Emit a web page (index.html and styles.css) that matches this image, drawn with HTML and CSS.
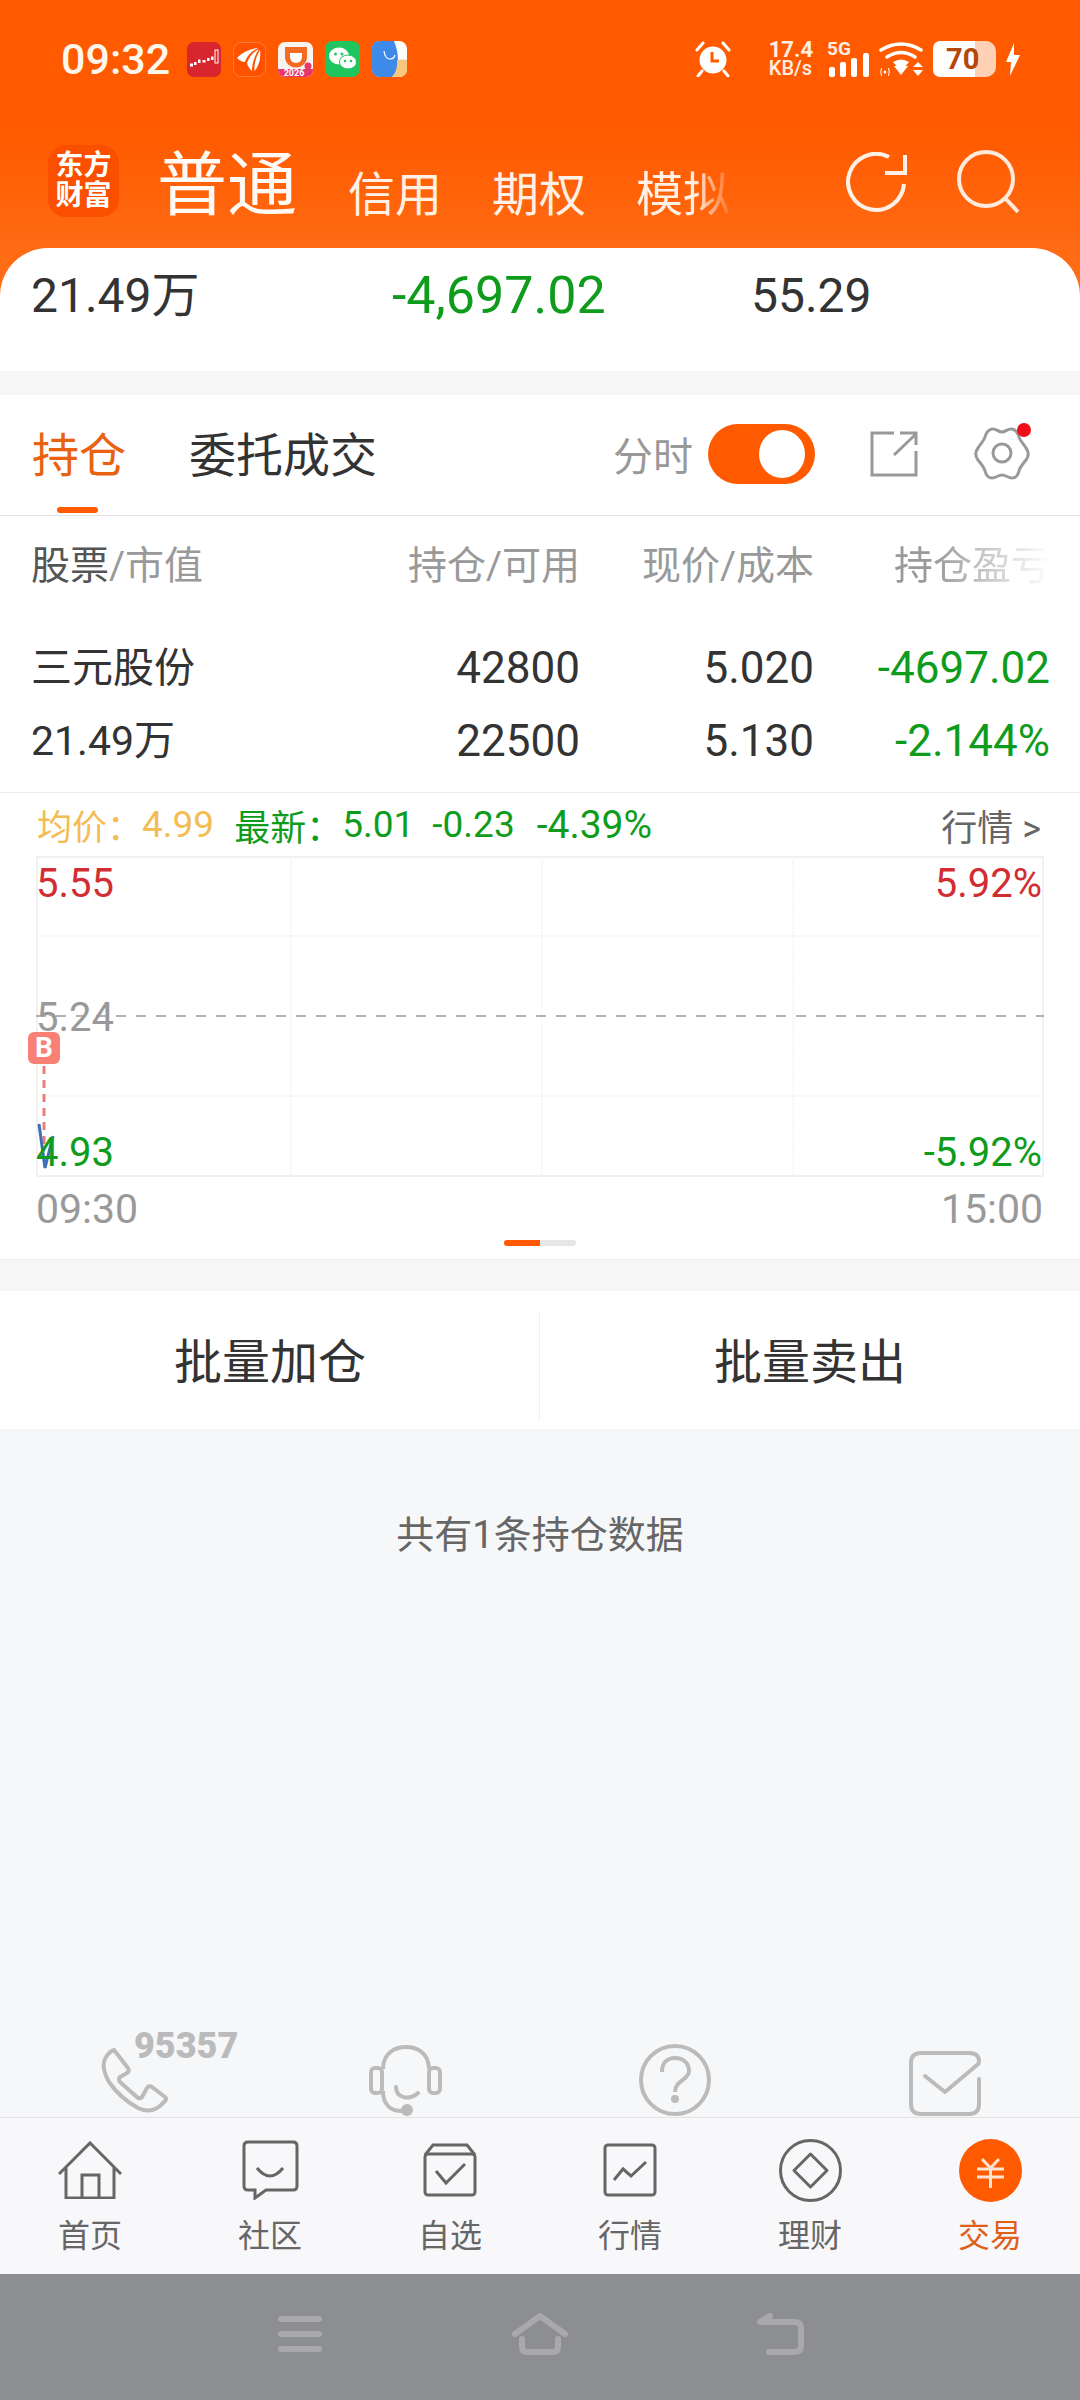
FILE: index.html
```html
<!DOCTYPE html>
<html lang="zh-CN">
<head>
    <meta charset="UTF-8">
    <meta name="viewport" content="width=device-width, initial-scale=1.0">
    <title>交易 - 持仓</title>
    <link rel="stylesheet" href="styles.css">
</head>
<body>
<div class="app">

    <div class="top">
        <div class="status-bar">
            <span class="clock">09:32</span>
            <div class="app-icons">
                <svg width="34" height="35" viewBox="0 0 34 35"><rect width="34" height="35" rx="7" fill="#d8262f"/><g fill="#fff"><rect x="3" y="21.500" width="3" height="3"/><rect x="7" y="20" width="2.500" height="3"/><rect x="11" y="17.500" width="2.500" height="3.500"/><rect x="15.500" y="18" width="3" height="2.500"/><rect x="20" y="16" width="2.500" height="3"/><rect x="24" y="14.500" width="2.500" height="3.500"/></g><rect x="28" y="8" width="3" height="13" fill="none" stroke="#fff" stroke-width="1"/></svg>
                <svg width="33" height="35" viewBox="0 0 33 35"><rect x=".5" y=".5" width="32" height="34" rx="8" fill="#ff5200" stroke="#ff7a3a"/><g fill="#fff"><path d="M25 6 C17 7 10 10 4 16 C7 19 10 20 12 20 C14 14 19 9 25 6Z"/><path d="M26 7 C20 10 16 15 14 21 C15 25 17 27 19 29 C19 21 22 13 26 7Z"/><path d="M27 8 C24 13 21 20 21.500 29 C26 24 28 16 27 8Z"/></g></svg>
                <svg width="35" height="35" viewBox="0 0 35 35"><rect width="35" height="35" rx="7" fill="#f8f4f0"/><path d="M7 5 H29 V15 A11 10.500 0 0 1 7 15Z" fill="#f26a24"/><path d="M12 11 H24 V15 A6 6 0 0 1 12 15Z" fill="#fff"/><path d="M0 27 H35 V28 A7 7 0 0 1 28 35 H7 A7 7 0 0 1 0 28Z" fill="#e8366a"/><circle cx="30" cy="24" r="3.500" fill="#e8366a"/><text class="didi-year" x="16" y="34">2026</text></svg>
                <svg width="35" height="36" viewBox="0 0 35 36"><rect width="35" height="36" rx="8" fill="#1fc55f"/><ellipse cx="14" cy="15" rx="10" ry="8.500" fill="#fff"/><ellipse cx="23" cy="21" rx="8.500" ry="7" fill="#fff" stroke="#1fc55f"/><g fill="#1fc55f"><circle cx="10.500" cy="13" r="1.500"/><circle cx="17" cy="13" r="1.500"/><circle cx="20" cy="20" r="1.300"/><circle cx="26" cy="20" r="1.300"/></g></svg>
                <svg width="35" height="36" viewBox="0 0 35 36"><rect width="35" height="36" rx="8" fill="#fdfdfb"/><path d="M8 0 H22 Q26 10 26 19 Q26 30 20 36 H8 Q0 36 0 28 V8 Q0 0 8 0Z" fill="#3d8ae8"/><path d="M25 19 Q30 18 35 19 V28 Q35 36 27 36 H20 Q26 30 25 19Z" fill="#f6c77d"/><path d="M12 10 Q13 18 18 18 Q22 18 23 14" fill="none" stroke="#fff" stroke-width="1.200"/></svg>
            </div>
            <div class="sys-icons">
                <svg class="alarm" width="38" height="36" viewBox="0 0 38 36"><circle cx="19" cy="19" r="13.500" fill="#fff"/><path d="M3 9 L9 2 M35 9 L29 2 M8 30 L4 35 M30 30 L34 35" stroke="#fff" stroke-width="3" stroke-linecap="round"/><path d="M18 11 V20 H25" fill="none" stroke="#ff5a00" stroke-width="3"/></svg>
                <div class="speed"><span>17.4</span><span class="speed-unit">KB/s</span></div>
                <div class="signal">
                    <span class="signal-type">5G</span>
                    <svg class="bars" width="40" height="24" viewBox="0 0 40 24"><g fill="#fff"><rect x="0" y="14" width="6" height="10" rx="2"/><rect x="11" y="9" width="6" height="15" rx="2"/><rect x="22" y="5" width="6" height="19" rx="2"/><rect x="34" y="0" width="6" height="24" rx="2"/></g></svg>
                </div>
                <svg class="wifi" width="44" height="36" viewBox="0 0 44 36"><g fill="none" stroke="#fff" stroke-width="3.500" stroke-linecap="round"><path d="M2 9 Q22 -3 42 9"/><path d="M8 16 Q22 7 36 16"/></g><path d="M14 21 Q22 16 30 21 L22 30Z" fill="#fff"/><path d="M22 36 L15 27 H29Z" fill="#fff" transform="translate(0 -2)"/><path d="M39 21 L44 26 H34Z M39 35 L34 29 H44Z" fill="#fff"/><circle cx="6" cy="31" r="1.500" fill="#fff"/><path d="M2.500 27 Q1 31 2.500 35 M9.500 27 Q11 31 9.500 35" fill="none" stroke="#fff"/></svg>
                <div class="battery"><span class="battery-level">70</span></div>
                <svg class="bolt" width="14" height="33" viewBox="0 0 14 33"><path d="M8 0 L0 19 H5 L4 33 L14 12 H8Z" fill="#fff"/></svg>
            </div>
        </div>

        <div class="trade-nav">
            <div class="logo"><span>东方</span><span>财富</span></div>
            <span class="nav-main">普通</span>
            <span class="nav-link">信用</span>
            <span class="nav-link">期权</span>
            <span class="nav-link nav-fade">模拟</span>
            <div class="nav-actions">
                <svg width="62" height="61" viewBox="0 0 62 61"><path d="M44 5 A28 28 0 1 0 59 32 M40 21 H60 V3" fill="none" stroke="#fff1e6" stroke-width="4"/></svg>
                <svg width="63" height="64" viewBox="0 0 63 64"><circle cx="29" cy="29" r="27" fill="none" stroke="#ffeadb" stroke-width="4"/><path d="M48 48 L61 62" stroke="#ffeadb" stroke-width="4"/></svg>
            </div>
        </div>

        <div class="summary">
            <span>21.49万</span>
            <span class="down">-4,697.02</span>
            <span>55.29</span>
        </div>
    </div>

    <div class="band band-small"></div>

    <div class="tabs">
        <div class="tab active">持仓</div>
        <div class="tab">委托成交</div>
        <div class="tab-tools">
            <span class="toggle-label">分时</span>
            <div class="toggle"><div class="toggle-knob"></div></div>
            <svg class="share" width="48" height="46" viewBox="0 0 48 46"><path d="M24 2 H2 V44 H46 V20 M24 24 L46 3 M30 2 H46 V14" fill="none" stroke="#999" stroke-width="3"/></svg>
            <div class="gear">
                <svg width="56" height="54" viewBox="0 0 56 54"><path d="M28 5 C24 5 22 1 18 2 C14 3 12 6 11 10 C10 14 7 16 4 21 C1 25 1 29 4 33 C7 37 10 40 11 44 C12 48 14 51 18 51 C22 51 24 48 28 48 C32 48 34 51 38 51 C42 51 44 48 45 44 C46 40 49 37 52 33 C55 29 55 25 52 21 C49 16 46 14 45 10 C44 6 42 3 38 2 C34 1 32 5 28 5Z" fill="none" stroke="#999" stroke-width="3"/><circle cx="28" cy="26" r="9" fill="none" stroke="#999" stroke-width="3"/></svg>
                <span class="gear-dot"></span>
            </div>
        </div>
    </div>

    <div class="table">
        <div class="table-row table-head">
            <span><b>股票</b>/市值</span>
            <span>持仓/可用</span>
            <span>现价/成本</span>
            <span class="head-fade">持仓盈亏</span>
        </div>
        <div class="table-row">
            <span class="stock-name">三元股份</span>
            <span>42800</span>
            <span>5.020</span>
            <span class="down">-4697.02</span>
        </div>
        <div class="table-row">
            <span class="stock-value">21.49万</span>
            <span>22500</span>
            <span>5.130</span>
            <span class="down">-2.144%</span>
        </div>
    </div>

    <div class="chart-section">
        <div class="chart-info">
            <span class="avg avg-label">均价：</span><span class="avg">4.99</span>
            <span class="down latest">最新：</span><span class="down">5.01</span>
            <span class="down change">-0.23</span>
            <span class="down pct">-4.39%</span>
            <span class="quote-link">行情 &gt;</span>
        </div>
        <div class="chart">
            <svg class="chart-grid" width="1008" height="321" viewBox="0 0 1008 321">
                <path d="M0 80 H1008 M0 240 H1008 M255 0 V321 M506 0 V321 M757 0 V321" stroke="#f5f5f5" stroke-width="1.500" stroke-dasharray="2 1"/>
                <path d="M0 160 H1008" stroke="#999" stroke-width="1.500" stroke-dasharray="10 10"/>
                <path d="M8 210 V295" stroke="#ec7d7d" stroke-width="3" stroke-dasharray="8 6"/>
                <path d="M3 268 L9 312 L17 280" fill="none" stroke="#3c6fb5" stroke-width="3"/>
            </svg>
            <span class="chart-label label-top up">5.55</span>
            <span class="chart-label label-mid">5.24</span>
            <span class="chart-label label-bottom down">4.93</span>
            <span class="chart-label label-top label-right up">5.92%</span>
            <span class="chart-label label-bottom label-right down">-5.92%</span>
            <span class="buy-mark">B</span>
        </div>
        <div class="chart-axis"><span>09:30</span><span>15:00</span></div>
        <div class="pager"><span class="pager-on"></span><span class="pager-off"></span></div>
    </div>

    <div class="band"></div>

    <div class="batch">
        <div class="batch-btn">批量加仓</div>
        <div class="batch-btn">批量卖出</div>
    </div>

    <div class="rest">
        <div class="count-note">共有1条持仓数据</div>
        <div class="service">
            <div class="service-item">
                <svg width="70" height="70" viewBox="-2 -2 70 70"><path d="M12 2 L26 20 Q28 23 25 25 L18 29 Q16 31 18 34 L36 50 Q38 51 40 49 L45 40 Q47 37 50 39 L63 49 Q65 51 63 53 L58 58 Q48 66 36 60 Q18 50 7 34 Q-2 18 4 9 Q8 3 12 2Z" fill="none" stroke="#bbb" stroke-width="4" stroke-linejoin="round"/></svg>
                <span class="hotline">95357</span>
            </div>
            <div class="service-item">
                <svg width="73" height="71" viewBox="0 0 73 71"><g fill="none" stroke="#bbb" stroke-width="4"><path d="M14 24 C14 8 26 2 37 2 C48 2 60 8 60 24"/><path d="M14 46 C14 60 22 66 33 66"/><path d="M27 42 C27 53 40 56 49 48" stroke-linecap="round"/><rect x="2" y="23" width="11" height="25" rx="4"/><rect x="60" y="23" width="11" height="25" rx="4"/></g><circle cx="38" cy="65" r="6" fill="#bbb"/></svg>
            </div>
            <div class="service-item">
                <svg width="72" height="72" viewBox="0 0 72 72"><circle cx="36" cy="36" r="34" fill="none" stroke="#bbb" stroke-width="4"/><path d="M23 28 C23 18 29 14 36 14 C45 14 50 20 50 27 C50 36 36 36 36 48" fill="none" stroke="#bbb" stroke-width="4"/><circle cx="36" cy="55" r="4" fill="#bbb"/></svg>
            </div>
            <div class="service-item">
                <svg width="72" height="65" viewBox="0 0 72 65"><path d="M70 28 V53 Q70 63 60 63 H12 Q2 63 2 53 V12 Q2 2 12 2 H60 Q70 2 70 10 Q70 13 68 14 L36 41 L16 25" fill="none" stroke="#bbb" stroke-width="4" stroke-linecap="round" stroke-linejoin="round"/></svg>
            </div>
        </div>
    </div>

    <div class="tabbar">
        <div class="tabbar-item">
            <div class="tabbar-icon"><svg width="64" height="58" viewBox="0 0 64 58"><path d="M1 33 L32 2 L63 33 M8 26 V57 H56 V26 M24 57 V34 H41 V57" fill="none" stroke="#666" stroke-width="3"/></svg></div>
            <span>首页</span>
        </div>
        <div class="tabbar-item">
            <div class="tabbar-icon"><svg width="57" height="60" viewBox="0 0 57 60"><path d="M6 2 H51 Q55 2 55 6 V46 Q55 50 51 50 H24 L13 58 V50 H6 Q2 50 2 46 V6 Q2 2 6 2Z M15 28 Q28 44 41 28" fill="none" stroke="#666" stroke-width="3"/></svg></div>
            <span>社区</span>
        </div>
        <div class="tabbar-item">
            <div class="tabbar-icon"><svg width="54" height="54" viewBox="0 0 54 54"><path d="M2 12 L10 2 H44 L52 12" fill="none" stroke="#666" stroke-width="3"/><rect x="2" y="11" width="50" height="41" rx="3" fill="none" stroke="#666" stroke-width="3"/><path d="M13 28 L23 40 L42 21" fill="none" stroke="#666" stroke-width="3"/></svg></div>
            <span>自选</span>
        </div>
        <div class="tabbar-item">
            <div class="tabbar-icon"><svg width="54" height="54" viewBox="0 0 54 54"><rect x="2" y="2" width="50" height="50" rx="3" fill="none" stroke="#666" stroke-width="3"/><path d="M11 37 L20 26 L28 33 L43 19" fill="none" stroke="#666" stroke-width="3"/></svg></div>
            <span>行情</span>
        </div>
        <div class="tabbar-item">
            <div class="tabbar-icon"><svg width="63" height="63" viewBox="0 0 63 63"><circle cx="31.500" cy="31.500" r="30" fill="none" stroke="#666" stroke-width="3"/><path d="M31.500 15 L48 31.500 L31.500 48 L15 31.500Z" fill="none" stroke="#666" stroke-width="3" stroke-linejoin="round"/></svg></div>
            <span>理财</span>
        </div>
        <div class="tabbar-item tabbar-active">
            <div class="tabbar-icon"><svg width="63" height="63" viewBox="0 0 63 63"><circle cx="31.500" cy="31.500" r="31.500" fill="#ff5a00"/><path d="M23 20 L31.500 29 L40 20 M18 30 H45 M18 38 H45 M31.500 29 V49" fill="none" stroke="#ffe3d2" stroke-width="3"/></svg></div>
            <span>交易</span>
        </div>
    </div>

    <div class="navbar">
        <div class="navbar-item"><svg width="44" height="36" viewBox="0 0 44 36"><path d="M3 3 H41 M3 18 H41 M3 33 H41" stroke="#a9a9ab" stroke-width="6" stroke-linecap="round"/></svg></div>
        <div class="navbar-item"><svg width="56" height="42" viewBox="0 0 56 42"><path d="M3 21 L28 3 L53 21 M10 26 V34 Q10 39 15 39 H41 Q46 39 46 34 V26" fill="none" stroke="#a9a9ab" stroke-width="6" stroke-linecap="round" stroke-linejoin="round"/></svg></div>
        <div class="navbar-item"><svg width="48" height="42" viewBox="0 0 48 42"><path d="M14 3 L4 9 H38 Q45 9 45 15 V33 Q45 39 38 39 H13" fill="none" stroke="#a9a9ab" stroke-width="6" stroke-linecap="round" stroke-linejoin="round"/></svg></div>
    </div>

</div>
</body>
</html>
```
FILE: styles.css
```css
* {
    box-sizing: border-box;
}
body {
    margin: 0;
    padding: 0;
    font-family: Roboto, "Noto Sans CJK SC", sans-serif;
    color: #333;
    background-color: #f6f7f9;
}
svg {
    display: block;
}
.app {
    width: 1080px;
    height: 2400px;
    display: flex;
    flex-direction: column;
    overflow: hidden;
}
.down {
    color: #0f9c1c;
}
.up {
    color: #d22d33;
}

/* orange top */
.top {
    background: linear-gradient(#ff5a00 0, #ff5a00 130px, #ff7019 290px, #ff7019 100%);
    color: #fff;
}
.status-bar {
    height: 118px;
    padding: 0 60px 0 61px;
    display: flex;
    align-items: center;
}
.clock {
    font-size: 43px;
    font-weight: 500;
    color: #fff6ec;
}
.app-icons {
    margin-left: 17px;
    display: flex;
    align-items: center;
    gap: 12px;
}
.didi-year {
    font-size: 9px;
    font-weight: 700;
    fill: #fff;
    text-anchor: middle;
}
.sys-icons {
    margin-left: auto;
    display: flex;
    align-items: center;
}
.speed {
    margin-left: 37px;
    display: flex;
    flex-direction: column;
    font-size: 22px;
    line-height: 18px;
    font-weight: 700;
    color: #ffefe2;
}
.speed-unit {
    font-size: 20px;
    font-weight: 500;
}
.signal {
    margin-left: 14px;
    display: flex;
    flex-direction: column;
    align-items: flex-start;
}
.signal-type {
    font-size: 19px;
    line-height: 14px;
    font-weight: 700;
    color: #ffefe2;
}
.bars {
    margin-top: -3px;
    margin-left: 2px;
}
.wifi {
    margin-left: 10px;
}
.battery {
    margin-left: 10px;
    width: 63px;
    height: 36px;
    border-radius: 7px 10px 10px 7px;
    background: linear-gradient(to right, #fff 42px, #ffd0b3 42px);
    font-size: 29px;
    line-height: 36px;
    font-weight: 700;
    color: #b3470c;
    padding-left: 13px;
}
.bolt {
    margin-left: 10px;
}
.trade-nav {
    height: 130px;
    padding: 0 60px 0 48px;
    display: flex;
    align-items: flex-end;
}
.logo {
    width: 71px;
    height: 72px;
    margin-bottom: 31px;
    border-radius: 18px;
    background-color: #fb4f00;
    display: flex;
    flex-direction: column;
    align-items: center;
    justify-content: center;
    font-size: 28px;
    line-height: 30px;
    font-weight: 700;
}
.nav-main {
    margin-left: 38px;
    margin-bottom: 22px;
    font-size: 70px;
    line-height: 80px;
    color: #fffaf5;
}
.nav-link {
    margin-left: 50px;
    margin-bottom: 25px;
    font-size: 47px;
    line-height: 56px;
    color: #fff1e6;
}
.nav-main + .nav-link {
    margin-left: 51px;
}
.nav-fade {
    -webkit-mask-image: linear-gradient(to right, #000 60%, transparent 105%);
    mask-image: linear-gradient(to right, #000 60%, transparent 105%);
}
.nav-actions {
    margin-left: auto;
    margin-bottom: 34px;
    display: flex;
    align-items: center;
    gap: 50px;
}
.summary {
    height: 123px;
    padding: 20px 0 0 31px;
    border-radius: 48px 48px 0 0;
    background-color: #fff;
    color: #333;
    display: grid;
    grid-template-columns: 361px 359px 1fr;
    align-items: start;
    font-size: 48px;
    line-height: 56px;
}
.summary .down {
    font-size: 52px;
}
.band {
    height: 31px;
    background-color: #f6f6f7;
}
.band-small {
    height: 24px;
}

/* tabs */
.tabs {
    height: 121px;
    padding: 0 50px 0 32px;
    background-color: #fff;
    border-bottom: 1px solid #e4e4e4;
    display: flex;
    align-items: center;
    gap: 63px;
}
.tab {
    position: relative;
    font-size: 47px;
    line-height: 60px;
    margin-top: 2px;
}
.tab.active {
    color: #e8620f;
}
.tab.active::after {
    content: "";
    position: absolute;
    left: 25px;
    bottom: -27px;
    width: 41px;
    height: 6px;
    border-radius: 3px;
    background-color: #ff5a00;
}
.tab-tools {
    margin-left: auto;
    margin-top: -3px;
    display: flex;
    align-items: center;
}
.toggle-label {
    font-size: 40px;
    color: #999;
    margin-right: 15px;
}
.toggle {
    width: 107px;
    height: 60px;
    border-radius: 30px;
    background-color: #ff5a00;
    padding: 6px 10px 0 0;
    display: flex;
    justify-content: flex-end;
}
.toggle-knob {
    width: 46px;
    height: 48px;
    border-radius: 50%;
    background-color: #fff;
}
.share {
    margin-left: 55px;
}
.gear {
    position: relative;
    margin-left: 56px;
}
.gear-dot {
    position: absolute;
    top: -4px;
    right: -1px;
    width: 14px;
    height: 14px;
    border-radius: 50%;
    background-color: #f00d1a;
}

/* position table */
.table {
    padding: 15px 0;
    background-color: #fff;
    border-bottom: 1px solid #ececec;
}
.table-row {
    height: 73px;
    padding: 0 30px 0 31px;
    display: grid;
    grid-template-columns: 300px 249px 234px 236px;
    align-items: center;
    font-size: 44px;
    line-height: 56px;
}
.table-row span:not(:first-child) {
    text-align: right;
}
.table-head {
    height: 100px;
    margin: -15px 0 15px;
    font-size: 39px;
    color: #999;
}
.table-head b {
    font-weight: 400;
    color: #555;
}
.stock-name {
    font-size: 41px;
}
.stock-value {
    font-size: 41px;
}
.head-fade {
    white-space: nowrap;
    -webkit-mask-image: linear-gradient(to right, #000 50%, transparent 100%);
    mask-image: linear-gradient(to right, #000 50%, transparent 100%);
}

/* chart */
.chart-section {
    height: 467px;
    background-color: #fff;
    border-bottom: 1px solid #ececec;
}
.chart-info {
    height: 63px;
    padding: 0 39px 0 37px;
    display: flex;
    align-items: center;
    font-size: 36px;
}
.chart-info .down,
.chart-info .avg {
    font-size: 37px;
}
.chart-info .latest {
    font-size: 36px;
}
.chart-info .avg-label {
    font-size: 35px;
}
.chart-info .pct {
    font-size: 39px;
}
.avg {
    color: #f3bc55;
}
.latest {
    margin-left: 20px;
}
.change {
    margin-left: 18px;
}
.pct {
    margin-left: 22px;
}
.quote-link {
    margin-left: auto;
    color: #666;
}
.chart {
    position: relative;
    height: 321px;
    margin: 0 36px;
    border: 2px solid #f1f1f1;
}
.chart-grid {
    position: absolute;
    left: -2px;
    top: -2px;
}
.chart-label {
    position: absolute;
    left: -2px;
    font-size: 40px;
    line-height: 44px;
    color: #999;
}
.label-top {
    top: 4px;
}
.label-mid {
    top: 138px;
}
.label-bottom {
    top: 273px;
}
.chart .label-top.up {
    color: #d22d33;
}
.chart .label-bottom.down {
    color: #0f9c1c;
}
.label-right {
    left: auto;
    right: 0;
}
.buy-mark {
    position: absolute;
    left: -10px;
    top: 174px;
    width: 32px;
    height: 32px;
    border-radius: 6px;
    background-color: #f98074;
    color: #fff;
    font-size: 28px;
    line-height: 32px;
    font-weight: 700;
    text-align: center;
}
.chart-axis {
    height: 63px;
    padding: 0 37px 0 36px;
    display: flex;
    justify-content: space-between;
    align-items: center;
    font-size: 41px;
    color: #999;
}
.pager {
    display: flex;
    justify-content: center;
}
.pager span {
    width: 36px;
    height: 6px;
}
.pager-on {
    background-color: #ff5a00;
    border-radius: 3px 0 0 3px;
}
.pager-off {
    background-color: #e6e6e6;
    border-radius: 0 3px 3px 0;
}

/* batch buttons */
.batch {
    height: 138px;
    background-color: #fff;
    display: flex;
}
.batch-btn {
    flex: 1;
    display: flex;
    align-items: center;
    justify-content: center;
    padding-bottom: 5px;
    font-size: 48px;
    color: #333;
}
.batch-btn:first-child {
    position: relative;
}
.batch-btn:first-child::after {
    content: "";
    position: absolute;
    right: 0;
    top: 20px;
    bottom: 8px;
    width: 1px;
    background-color: #f1f1f1;
}

/* lower area */
.rest {
    flex: 1;
    display: flex;
    flex-direction: column;
    background-color: #f6f7f9;
}
.count-note {
    margin-top: 78px;
    text-align: center;
    font-size: 38px;
    line-height: 56px;
    color: #666;
}
.service {
    margin-top: auto;
    display: grid;
    grid-template-columns: repeat(4, 270px);
    padding-bottom: 1px;
}
.service-item {
    position: relative;
    display: flex;
    justify-content: center;
    align-items: flex-end;
}
.hotline {
    position: absolute;
    left: 134px;
    bottom: 50px;
    font-size: 36px;
    line-height: 40px;
    font-weight: 900;
    color: #bbb;
}
.tabbar {
    height: 157px;
    background-color: #f8f8fa;
    border-top: 1px solid #e3e3e3;
    display: grid;
    grid-template-columns: repeat(6, 180px);
}
.tabbar-item {
    display: flex;
    flex-direction: column;
    align-items: center;
    font-size: 32px;
    color: #666;
}
.tabbar-icon {
    height: 64px;
    margin-top: 20px;
    display: flex;
    align-items: center;
}
.tabbar-item span {
    line-height: 46px;
    margin-top: 11px;
}
.tabbar-active {
    color: #e0601a;
}
.navbar {
    height: 126px;
    background-color: #8d8e92;
    display: flex;
    justify-content: center;
    padding-bottom: 6px;
}
.navbar-item {
    width: 240px;
    display: flex;
    align-items: center;
    justify-content: center;
}
```
